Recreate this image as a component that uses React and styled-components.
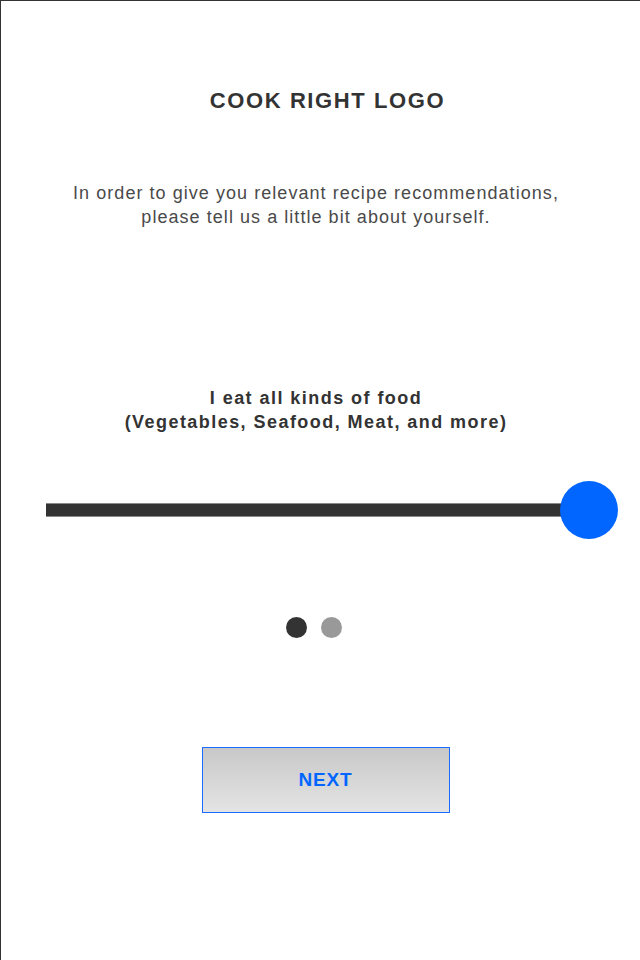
import React from 'react'
import styled, { createGlobalStyle } from 'styled-components'

const GlobalStyle = createGlobalStyle`
  html, body {
    margin: 0;
    padding: 0;
    background: #ffffff;
  }
  body {
    font-family: "Liberation Sans", Arial, sans-serif;
  }
`

const Screen = styled.div`
  box-sizing: border-box;
  width: 640px;
  height: 960px;
  border-top: 1px solid #333333;
  border-left: 1px solid #333333;
  display: flex;
  flex-direction: column;
  align-items: center;
  background: #ffffff;
  overflow: hidden;
`

const Logo = styled.h1`
  margin: 87px 0 0 ${p => p.$shift || 0}px;
  font-size: 22px;
  line-height: 26px;
  font-weight: 700;
  letter-spacing: 1.6px;
  color: #333333;
`

const Intro = styled.p`
  margin: 67px 0 0 ${p => p.$shift || 0}px;
  font-size: 18px;
  line-height: 24px;
  font-weight: 400;
  letter-spacing: 1.05px;
  color: #4a4a4a;
  text-align: center;
`

const Choice = styled.p`
  margin: 157px 0 0 ${p => p.$shift || 0}px;
  font-size: 18px;
  line-height: 24px;
  font-weight: 700;
  letter-spacing: 1.45px;
  color: #333333;
  text-align: center;
`

const SliderRow = styled.div`
  align-self: stretch;
  margin-top: 47px;
  padding-left: 45px;
  display: flex;
`

const Slider = styled.div`
  position: relative;
  width: 572px;
  height: 58px;
  display: flex;
  align-items: center;
`

const Track = styled.div`
  flex: 1;
  height: 12px;
  margin-right: 29px;
  background: #333333;
  border-top: 1px solid #8a8a8a;
  border-bottom: 1px solid #8a8a8a;
`

const Thumb = styled.div`
  position: absolute;
  right: 0;
  top: 0;
  width: 58px;
  height: 58px;
  border-radius: 50%;
  background: #0066ff;
`

const Dots = styled.div`
  margin: 78px 0 0 ${p => p.$shift || 0}px;
  display: flex;
  gap: 14px;
`

const Dot = styled.span`
  width: 21px;
  height: 21px;
  border-radius: 50%;
  background: ${p => (p.$active ? '#333333' : '#999999')};
`

const NextButton = styled.button`
  box-sizing: border-box;
  margin: 109px 0 0 ${p => p.$shift || 0}px;
  width: 248px;
  height: 66px;
  border: 1px solid #1a6bff;
  background: linear-gradient(to bottom, #c8c8c8, #e4e4e4);
  color: #0066ff;
  font-family: "Liberation Sans", Arial, sans-serif;
  font-size: 19px;
  font-weight: 700;
  letter-spacing: 0.8px;
  cursor: pointer;
`

function App() {
  return (
    <>
      <GlobalStyle />
      <Screen>
        <Logo $shift={14}>COOK RIGHT LOGO</Logo>
        <Intro $shift={-9}>
          In order to give you relevant recipe recommendations,
          <br />
          please tell us a little bit about yourself.
        </Intro>
        <Choice $shift={-9}>
          I eat all kinds of food
          <br />
          (Vegetables, Seafood, Meat, and more)
        </Choice>
        <SliderRow>
          <Slider>
            <Track />
            <Thumb />
          </Slider>
        </SliderRow>
        <Dots $shift={-13}>
          <Dot $active />
          <Dot />
        </Dots>
        <NextButton $shift={10}>NEXT</NextButton>
      </Screen>
    </>
  )
}

export default App
